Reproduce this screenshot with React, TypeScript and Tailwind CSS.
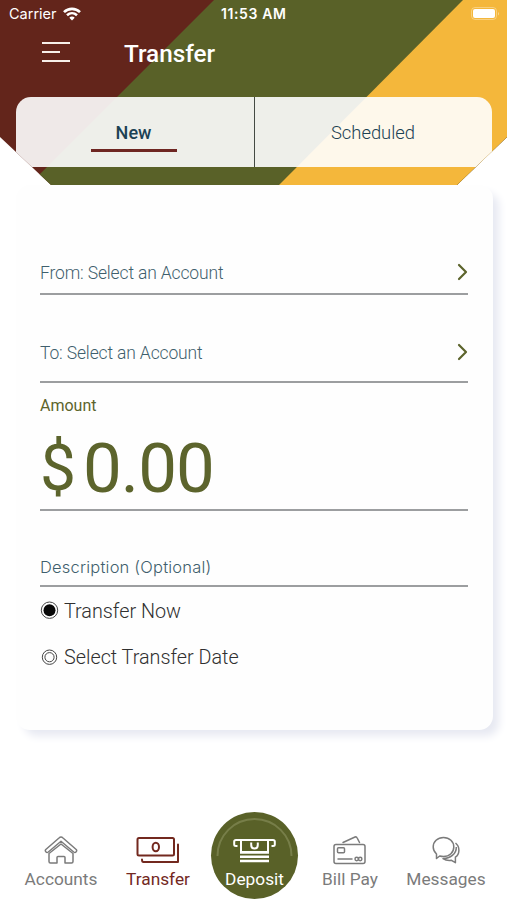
import React from 'react';

function StatusBar() {
  return (
    <div className="relative flex h-[28px] items-center justify-between pl-[9px] pr-[7px] font-['Inter',sans-serif] text-white">
      <div className="flex items-center gap-[6px]">
        <span className="text-[14.5px] leading-none">Carrier</span>
        <svg width="18" height="14" viewBox="0 0 18 14" fill="none" stroke="white" strokeWidth="2.6">
          <path d="M1 5.2C5.5 .7 12.5 .7 17 5.2" />
          <path d="M4 8.3C7 5.5 11 5.5 14 8.3" />
          <path d="M6.3 10.7C7.8 9.2 10.2 9.2 11.7 10.7L9 13.5Z" fill="white" stroke="none" />
        </svg>
      </div>
      <span className="absolute left-[221px] text-[14px] font-semibold leading-none tracking-[0.6px]">11:53 AM</span>
      <svg width="29" height="14" viewBox="0 0 29 14">
        <rect x=".5" y=".5" width="25" height="12" rx="3.5" fill="none" stroke="white" strokeOpacity=".35" />
        <rect x="2" y="2" width="22" height="9" rx="2" fill="white" />
        <path d="M27 5v3.5c1.3-.5 1.3-3 0-3.5" fill="white" fillOpacity=".45" />
      </svg>
    </div>
  );
}

function Header() {
  return (
    <header className="relative h-[185px] [clip-path:polygon(0_0,100%_0,100%_137px,457px_100%,51px_100%,0_137px)]">
      {/* Diagonal brand stripes */}
      <svg className="absolute inset-0" width="507" height="185">
        <rect width="507" height="185" fill="#63251b" />
        <path d="M214 0H507V185H29Z" fill="#596128" />
        <path d="M463 0H507V185H279Z" fill="#f4b73b" />
      </svg>

      <div className="relative">
        <StatusBar />
        <div className="flex h-[69px] items-start pl-[42px] pt-[14px]">
          <div className="mr-[54px] flex w-[28px] flex-col gap-[7px]">
            <div className="h-[2px] w-full bg-[#f7efe9]" />
            <div className="h-[2px] w-[18px] bg-[#f7efe9]" />
            <div className="h-[2px] w-full bg-[#f7efe9]" />
          </div>
          <h1 className="text-[24.3px] font-medium leading-[24px] text-white">Transfer</h1>
        </div>

        <div className="mx-[15.5px] flex h-[70px] overflow-hidden rounded-t-[15px] bg-white/90 text-[#1c4254]">
          <div className="flex w-[239px] flex-col items-center border-r border-[#444a44] pr-[2px] pt-[25px]">
            <span className="text-[18px] font-medium leading-[22px]">New</span>
            <div className="mt-[5px] h-[2.5px] w-[86px] bg-[#6e2622]" />
          </div>
          <div className="flex-1 pt-[25px] text-center text-[18.4px] font-light leading-[22px]">Scheduled</div>
        </div>
      </div>
    </header>
  );
}

function AccountRow({ label, className }: { label: string; className: string }) {
  return (
    <div className={`flex justify-between border-b-2 border-[#9c9ea0] text-[#3f5f6d] ${className}`}>
      <span className="text-[17.5px] font-light leading-[20px] tracking-[-0.15px]">{label}</span>
      <svg width="11" height="18" viewBox="0 0 11 18" fill="none" stroke="#5c642c" strokeWidth="2.2" strokeLinecap="round" strokeLinejoin="round">
        <path d="M2 2L9 9L2 16" />
      </svg>
    </div>
  );
}

function TransferForm() {
  return (
    <main className="ml-[16px] mr-[14.5px] h-[545px] rounded-[14px] bg-[#fefefe] pl-[24px] pr-[24.5px] shadow-[7px_7px_9px_-1px_#e7e9f2]">
      <AccountRow label="From: Select an Account" className="h-[110px] pt-[78px]" />
      <AccountRow label="To: Select an Account" className="h-[88px] pt-[48px]" />

      <div className="h-[128px] border-b-2 border-[#9c9ea0] pt-[13px] text-[#5c642c]">
        <div className="text-[16px] leading-[20px]">Amount</div>
        <div className="mt-[23px] flex text-[69px] leading-[60px]">
          <span className="mr-[7px] text-[64px]">$</span>
          <span className="tracking-[-0.9px]">0.00</span>
        </div>
      </div>

      <div className="h-[76px] border-b-2 border-[#9c9ea0] pt-[46px] font-['Inter',sans-serif] text-[16.5px] font-light leading-[20px] tracking-[0.2px] text-[#3f5f6d]">
        Description (Optional)
      </div>

      <div className="flex h-[47px] items-center gap-[5px] text-[19.8px] font-light text-[#303030]">
        <svg width="19" height="19" viewBox="0 0 19 19">
          <circle cx="9.5" cy="9.2" r="8.2" fill="none" stroke="#444" />
          <circle cx="9.5" cy="9.2" r="6" fill="#080808" />
        </svg>
        <span className="pt-[2px]">Transfer Now</span>
      </div>
      <div className="flex h-[46px] items-center gap-[5px] text-[19.8px] font-light text-[#303030]">
        <svg width="19" height="19" viewBox="0 0 19 19" fill="none" stroke="#444">
          <circle cx="9.5" cy="9.2" r="7.2" />
          <circle cx="9.5" cy="9.2" r="4.6" />
        </svg>
        <span className="pt-[2px]">Select Transfer Date</span>
      </div>
    </main>
  );
}

function AccountsIcon() {
  return (
    <svg width="34" height="28" viewBox="0 0 34 28" fill="none" stroke="currentColor" strokeWidth="1.5" strokeLinejoin="round">
      <path d="M17 1Q18 1 19 2L32.2 13.5Q33.2 14.6 32.2 15.8Q31 17 29.7 16L17 5.3L4.3 16Q3 17 1.8 15.8Q.8 14.6 1.8 13.5L15 2Q16 1 17 1Z" />
      <path d="M5 17.5L17 8L29 17.5V25.5Q29 27 27.5 27H21V21.5Q21 20.5 20 20.5H14Q13 20.5 13 21.5V27H6.5Q5 27 5 25.5Z" />
    </svg>
  );
}

function TransferIcon() {
  return (
    <svg width="44" height="28" viewBox="0 0 44 28" fill="none" stroke="currentColor" strokeWidth="2" strokeLinecap="round" strokeLinejoin="round">
      <rect x="1.5" y="2" width="36.5" height="17.5" rx="1.5" />
      <ellipse cx="19.8" cy="11" rx="3.2" ry="4.3" />
      <path d="M42 8.5V26H7.5Q6 26 6 23.5" />
    </svg>
  );
}

function BillPayIcon() {
  return (
    <svg width="34" height="30" viewBox="0 0 34 30" fill="none" stroke="currentColor" strokeWidth="1.5" strokeLinecap="round" strokeLinejoin="round">
      <rect x="1" y="9.5" width="31" height="19" rx="2" />
      <rect x="4.5" y="12.8" width="7" height="5" rx="1" />
      <path d="M5 24H19M10 7.5L22 2Q23.5 1.5 24.2 3L26.5 7.5" />
      <circle cx="23.7" cy="24" r="1.7" />
      <circle cx="27.2" cy="24" r="1.7" />
    </svg>
  );
}

function MessagesIcon() {
  return (
    <svg width="30" height="29" viewBox="0 0 30 29" fill="none" stroke="currentColor" strokeWidth="1.5" strokeLinejoin="round">
      <path d="M12.5 1.5C18.6 1.5 22.8 5.8 22.8 11S18.6 20.5 12.5 20.5Q10.5 20.5 8.7 20L5.5 22.5V18Q2.2 15 2.2 11C2.2 5.8 6.4 1.5 12.5 1.5Z" />
      <path d="M24.5 7C29.3 11 28.8 18 24.4 21.2V26.7L20.5 24.3Q15.5 25 12 22.6C19 22.6 25.6 18 25.3 11" />
    </svg>
  );
}

function NavItem({ label, className, children }: { label: string; className: string; children: React.ReactNode }) {
  return (
    <div className={`flex flex-col items-center ${className}`}>
      <div className="flex h-[32px] items-center">{children}</div>
      <span className="mt-[2px] text-[17.3px] leading-[22px]">{label}</span>
    </div>
  );
}

function BottomNav() {
  return (
    <nav className="mt-[82px] flex h-[88px] overflow-hidden text-[#7b7b7b]">
      <NavItem label="Accounts" className="ml-[13px] w-[96px] pt-[22px]">
        <AccountsIcon />
      </NavItem>
      <NavItem label="Transfer" className="w-[98px] pt-[22px] text-[#73291f]">
        <TransferIcon />
      </NavItem>
      <div className="relative ml-[4px] flex size-[87px] shrink-0 flex-col items-center rounded-full bg-[#596128] pt-[26px] text-white">
        <svg className="absolute inset-0" width="87" height="87" fill="none" stroke="#777e49" strokeWidth="2">
          <path d="M6.5 44A37 37 0 0 1 80.5 44" />
        </svg>
        <svg width="43" height="25" viewBox="0 0 43 25" fill="none" stroke="white" strokeWidth="2">
          <path d="M4.5 8H3Q1.2 8 1.2 6.5V3.5Q1.2 2 3 2H40Q41.8 2 41.8 3.5V6.5Q41.8 8 40 8H38.5" />
          <path d="M8 3V14H35V3M18.2 4.5V7Q18.2 10.5 21.5 10.5T24.8 7V4.5" />
          <path d="M7 14.5H36M7 18.7H36M7 23H36" strokeWidth="2.4" />
        </svg>
        <span className="mt-[5px] text-[17.3px] leading-[22px]">Deposit</span>
      </div>
      <NavItem label="Bill Pay" className="ml-[4px] w-[96px] pt-[22px]">
        <BillPayIcon />
      </NavItem>
      <NavItem label="Messages" className="w-[96px] pt-[22px]">
        <MessagesIcon />
      </NavItem>
    </nav>
  );
}

export default function App() {
  return (
    <div className="h-[900px] w-[507px] overflow-hidden bg-white font-['Roboto',sans-serif]">
      <Header />
      <TransferForm />
      <BottomNav />
    </div>
  );
}
